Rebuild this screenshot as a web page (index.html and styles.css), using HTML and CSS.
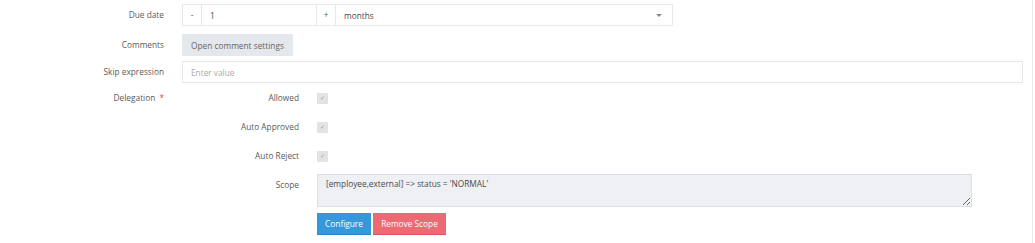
FILE: index.html
```html
<!DOCTYPE html>
<html lang="en">
<head>
    <meta charset="UTF-8">
    <title>Task settings</title>
    <link rel="stylesheet" href="styles.css">
</head>
<body>
    <div class="panel">
        <!-- Due date -->
        <div class="form-row row-due">
            <label class="form-label">Due date</label>
            <div class="input-group">
                <span class="addon">-</span>
                <input type="text" class="group-input" value="1">
                <span class="addon">+</span>
                <div class="select">
                    <span>months</span>
                    <span class="caret"></span>
                </div>
            </div>
        </div>

        <!-- Comments -->
        <div class="form-row row-comments">
            <label class="form-label">Comments</label>
            <div>
                <button type="button" class="btn btn-light">Open comment settings</button>
            </div>
        </div>

        <!-- Skip expression -->
        <div class="form-row row-skip">
            <label class="form-label">Skip expression</label>
            <input type="text" class="form-control" placeholder="Enter value">
        </div>

        <!-- Delegation -->
        <div class="form-row row-delegation">
            <label class="form-label">Delegation <span class="required">*</span></label>
            <div class="sub-form">
                <div class="sub-row">
                    <label class="sub-label">Allowed</label>
                    <span class="check">&#10003;</span>
                </div>
                <div class="sub-row">
                    <label class="sub-label">Auto Approved</label>
                    <span class="check">&#10003;</span>
                </div>
                <div class="sub-row">
                    <label class="sub-label">Auto Reject</label>
                    <span class="check">&#10003;</span>
                </div>
                <div class="sub-row sub-scope">
                    <label class="sub-label">Scope</label>
                    <div class="scope-box">
                        <textarea class="scope-text" readonly>[employee,external] => status = 'NORMAL'</textarea>
                        <div class="btn-row">
                            <button type="button" class="btn btn-blue">Configure</button>
                            <button type="button" class="btn btn-red">Remove Scope</button>
                        </div>
                    </div>
                </div>
            </div>
        </div>
    </div>
</body>
</html>
```

FILE: styles.css
```css
body {
    margin: 0;
    font-family: 'Open Sans', 'Liberation Sans', sans-serif;
    font-size: 8.3px;
    color: #5a5a5a;
    background-color: white;
}

.panel {
    width: 1023px;
    height: 243px;
    padding: 4px 9px 0 0;
    border-right: 1px solid #e9eaec;
    box-sizing: content-box;
}

.form-row {
    display: grid;
    grid-template-columns: 164px 1fr;
    column-gap: 18px;
    align-items: start;
}

.row-comments {
    margin-top: 8px;
}

.row-skip {
    margin-top: 5px;
}

.row-delegation {
    margin-top: 4px;
}

.form-label {
    text-align: right;
    line-height: 22px;
}

.required {
    color: #e0484f;
    margin-left: 2px;
}

/* input group */
.input-group {
    display: flex;
    width: 491px;
    height: 22px;
    border: 1px solid #e6e8eb;
    box-sizing: border-box;
}

.addon {
    width: 18px;
    flex: none;
    text-align: center;
    line-height: 20px;
}

.group-input {
    width: 116px;
    flex: none;
    border: none;
    border-left: 1px solid #e6e8eb;
    border-right: 1px solid #e6e8eb;
    padding: 0 8px;
    font: inherit;
    color: #4a4a4a;
    box-sizing: border-box;
    outline: none;
}

.select {
    flex: 1;
    display: flex;
    align-items: center;
    justify-content: space-between;
    padding: 0 10px 0 8px;
    border-left: 1px solid #e6e8eb;
    color: #4a4a4a;
}

.caret {
    width: 0;
    height: 0;
    border-left: 3.5px solid transparent;
    border-right: 3.5px solid transparent;
    border-top: 3.5px solid #888;
}

.form-control {
    width: 100%;
    height: 22px;
    padding: 0 8px;
    border: 1px solid #e6e8eb;
    font: inherit;
    color: #4a4a4a;
    box-sizing: border-box;
    outline: none;
}

.form-control::placeholder {
    color: #aaa;
}

/* buttons */
.btn {
    height: 22px;
    padding: 0;
    border: none;
    font: inherit;
    cursor: pointer;
}

.btn-light {
    width: 111px;
    background-color: #e4e7ec;
    color: #666;
}

.btn-blue {
    background-color: #3498db;
    color: white;
    border-bottom: 1px solid #2a86c4;
    width: 54px;
}

.btn-red {
    background-color: #ed6a74;
    color: white;
    border-bottom: 1px solid #d9545e;
    width: 73px;
}

/* delegation */
.sub-row {
    display: grid;
    grid-template-columns: 117px 1fr;
    column-gap: 18px;
    align-items: center;
    height: 22px;
    margin-bottom: 7px;
}

.sub-label {
    text-align: right;
    line-height: 22px;
}

.check {
    display: block;
    width: 11px;
    height: 11px;
    background-color: #e3e3e3;
    color: #9a9a9a;
    font-size: 6px;
    line-height: 11px;
    text-align: center;
}

.sub-scope {
    height: auto;
    align-items: start;
    margin-bottom: 0;
}

.scope-box {
    width: 655px;
}

.scope-text {
    display: block;
    width: 100%;
    height: 33px;
    padding: 3px 8px;
    background-color: #eef0f4;
    border: 1px solid #dcdfe4;
    font: inherit;
    color: #4a4a4a;
    box-sizing: border-box;
    resize: vertical;
    outline: none;
}

.btn-row {
    display: flex;
    gap: 2px;
    margin-top: 6px;
}
```
